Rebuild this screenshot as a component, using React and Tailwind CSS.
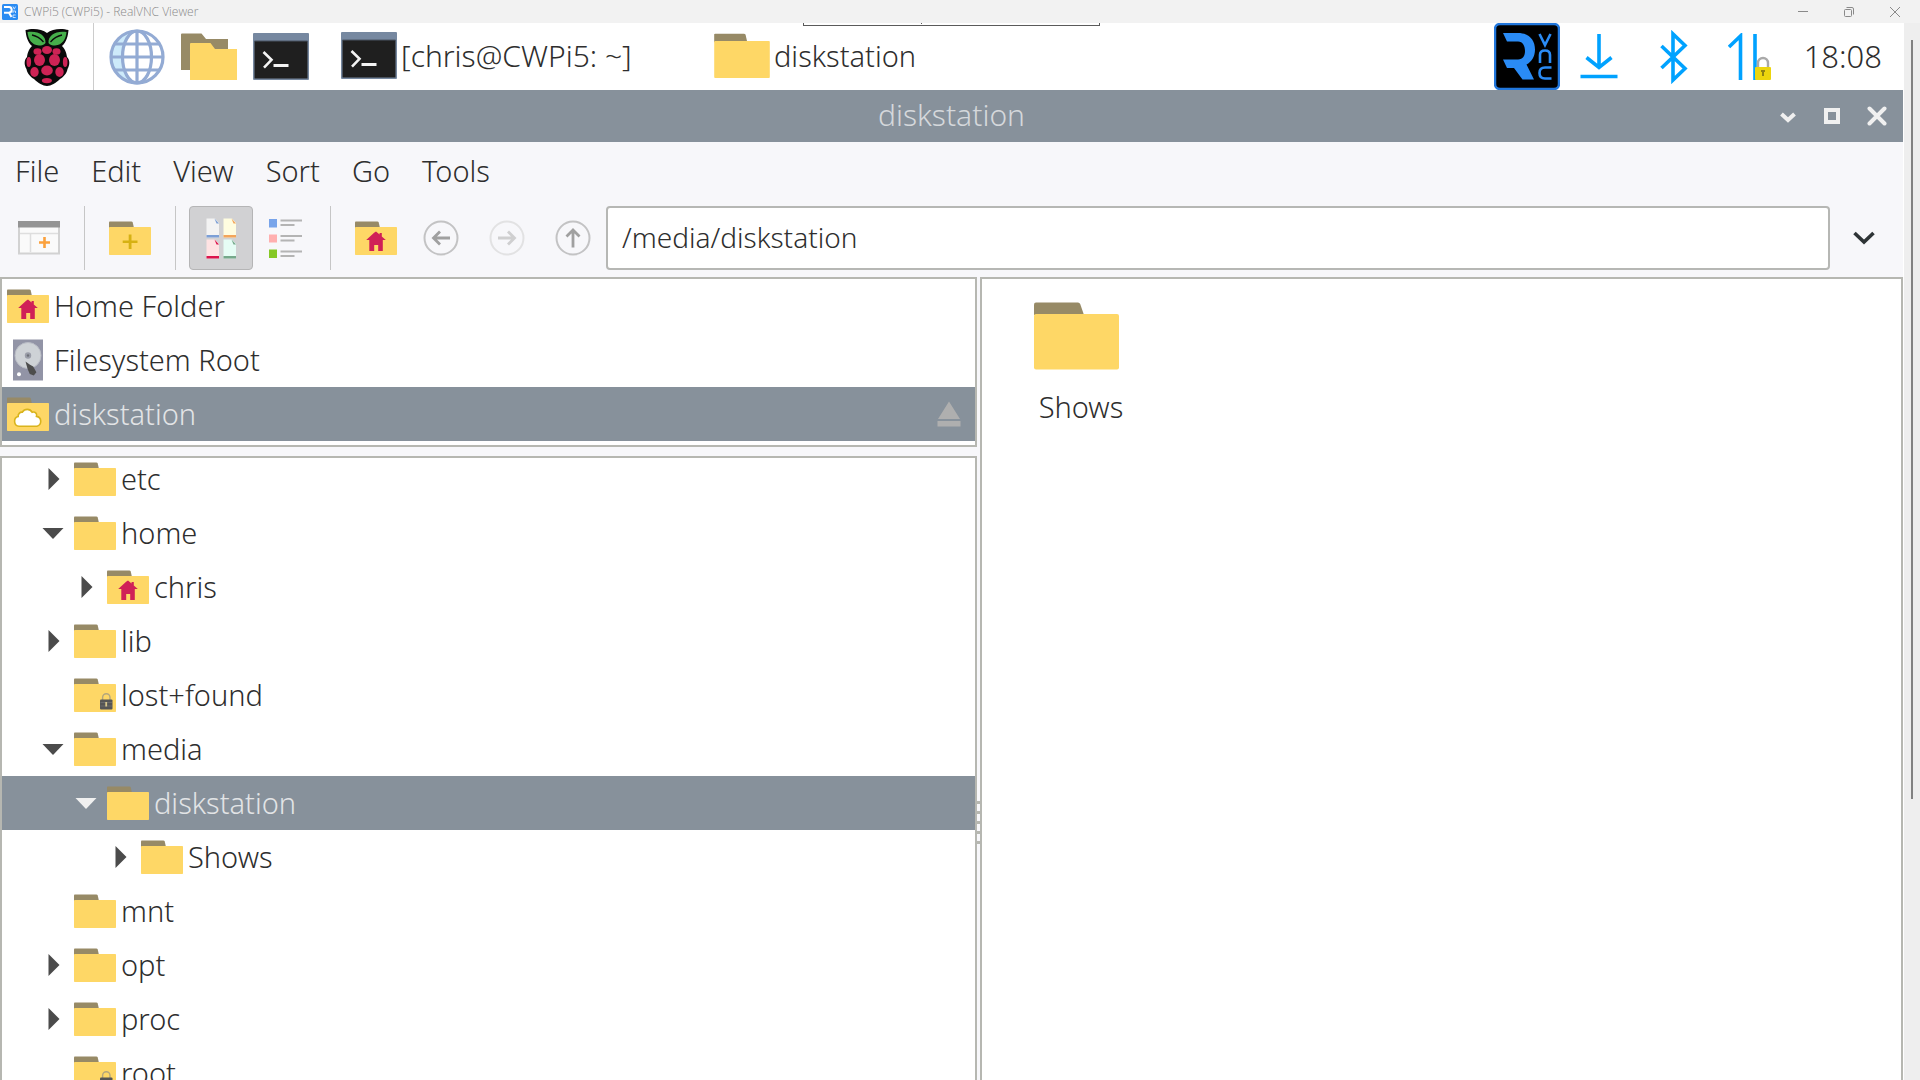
import React from "react";

const MENUS = ["File", "Edit", "View", "Sort", "Go", "Tools"];

const PLACES = [
  { name: "Home Folder", icon: "home" },
  { name: "Filesystem Root", icon: "disk" },
  { name: "diskstation", icon: "cloud", selected: true, eject: true },
];

// arrow: "right" = collapsed, "down" = expanded, none = leaf
const TREE = [
  { name: "etc", level: 1, arrow: "right" },
  { name: "home", level: 1, arrow: "down" },
  { name: "chris", level: 2, arrow: "right", icon: "home" },
  { name: "lib", level: 1, arrow: "right" },
  { name: "lost+found", level: 1, icon: "lock" },
  { name: "media", level: 1, arrow: "down" },
  { name: "diskstation", level: 2, arrow: "down", selected: true },
  { name: "Shows", level: 3, arrow: "right" },
  { name: "mnt", level: 1 },
  { name: "opt", level: 1, arrow: "right" },
  { name: "proc", level: 1, arrow: "right" },
  { name: "root", level: 1, icon: "lock" },
];

const INDENT = { 1: "pl-[39px]", 2: "pl-[72px]", 3: "pl-[106px]" };

/* ---------- Icons ---------- */

function FolderIcon({ icon, className = "h-[34px] w-[42px]" }) {
  return (
    <svg viewBox="0 0 42 34" className={`shrink-0 ${className}`} aria-hidden="true">
      <path d="M0 7V1.2Q0 .5.8 .5H22.4q.9 0 1.3.9L25 7z" fill="#978a66" />
      <rect y="6" width="42" height="28" rx=".7" fill="#fed766" />
      {icon === "home" && (
        <path d="M21 10.5l3.6 3V12h2.2v3.4l4 3.6h-3v11h-4.6v-6h-4v6h-4.9V19h-3.1l7.9-7.200z" fill="#d02057" />
      )}
      {icon === "plus" && <path d="M19.7 13.5h2.8v6h6v2.6h-6v6h-2.8v-6h-6v-2.6h6z" fill="#d6b113" />}
      {icon === "cloud" && (
        <path
          d="M12 29.2a4.9 4.9 0 0 1-.8-9.6 3.8 3.8 0 0 1 4.2-4.4 5.6 5.6 0 0 1 9.8.1 3.2 3.2 0 0 1 4.3 4.1 5 5 0 0 1 .4 9.8z"
          fill="#fff"
          stroke="#d9b41c"
          strokeWidth="1.6"
        />
      )}
      {icon === "lock" && (
        <g>
          <path d="M28.6 22v-2.6a3.7 3.7 0 0 1 7.4 0V22" fill="none" stroke="#b3a67d" strokeWidth="1.4" />
          <rect x="26" y="21.5" width="12.5" height="10" rx="1" fill="#555" />
          <path d="M26.5 24.5h11.5M26.5 28h11.5" stroke="#6b6b6b" strokeWidth="1" />
          <path d="M31.3 24h1.8v4.5h-1.8z" fill="#d6c58b" />
        </g>
      )}
    </svg>
  );
}

function DiskIcon() {
  return (
    <svg viewBox="0 0 42 42" className="h-[42px] w-[42px] shrink-0" aria-hidden="true">
      <rect x="6" y=".5" width="30" height="41" fill="#9294a6" />
      <circle cx="21" cy="16.5" r="13" fill="#ced2d6" stroke="#b9bcc5" strokeWidth="1" />
      <circle cx="21" cy="16.5" r="3.2" fill="#9a9da8" />
      <circle cx="21" cy="16.5" r="1.2" fill="#6d7078" />
      <path d="M18.5 22.5l4.5 3.2 3.2 1.8 3.2 5.8-2.6 3.2-4-1.6-2.2-5z" fill="#4d4d4d" />
      <circle cx="12" cy="35.3" r="2" fill="#fff" />
    </svg>
  );
}

function TerminalIcon() {
  return (
    <svg viewBox="0 0 56 47" className="h-[47px] w-[56px] shrink-0" aria-hidden="true">
      <rect width="56" height="47" rx="1" fill="#7688a0" />
      <rect x="1.5" y="8" width="53" height="37.5" fill="#1f1f1f" />
      <path d="M1.5 8h53" stroke="#4a5563" strokeWidth="1" />
      <path d="M10.5 19l8 7.8-7.5 7.8" fill="none" stroke="#f4f4f4" strokeWidth="2.6" />
      <path d="M20.5 32.5h15" stroke="#f4f4f4" strokeWidth="3" />
    </svg>
  );
}

function RaspberryIcon() {
  const drupelets = [
    [23, 22, 5, 4], [13.5, 23.5, 4, 3.2], [32.5, 23.5, 4, 3.2],
    [15.5, 32, 5.5, 6], [30.5, 32, 5.5, 6], [23, 42.5, 5.8, 5],
    [4.8, 34, 2.3, 5], [41.2, 34, 2.3, 5], [10.5, 44, 4.2, 5],
    [35.5, 44, 4.2, 5], [22.9, 52.6, 5, 2.7],
  ];
  return (
    <svg viewBox="0 0 46 58" className="h-[58px] w-[46px]" aria-hidden="true">
      <path
        d="M23 5C18 .5 8 0 1.5 2c.5 6 2 12 6.5 16C4 22 3.5 26 3 29c-3 3-3 8-.5 12 .5 4 4 8 7.5 10 4 4 9 7 13 7s9-3 13-7c3.5-2 7-6 7.5-10 2.5-4 2.5-9-.5-12-.5-3-1-7-5-11 4.500-4 6-10 6.500-16C38 0 28 .5 23 5z"
        fill="#0a0a0a"
      />
      <path d="M21.5 15C22 7 14 2.5 3.5 4c.5 7 4 13 11.5 13.5 3 0 5-.5 6.5-2.5zM24.5 15C24 7 32 2.5 42.5 4c-.5 7-4 13-11.5 13.5-3 0-5-.5-6.5-2.5z" fill="#46af4b" />
      <path d="M8 7c5 1 8.5 3.5 11.5 7M38 7c-5 1-8.5 3.5-11.5 7" fill="none" stroke="#0a0a0a" strokeWidth="1.3" />
      {drupelets.map(([cx, cy, rx, ry]) => (
        <ellipse key={`${cx}-${cy}`} cx={cx} cy={cy} rx={rx} ry={ry} fill="#cd2355" />
      ))}
    </svg>
  );
}

function GlobeIcon() {
  return (
    <svg viewBox="0 0 56 56" className="h-14 w-14" aria-hidden="true">
      <circle cx="28" cy="28" r="26" fill="#fff" />
      <path d="M28 2A26 26 0 0 0 28 54C18 50 13 40 13 28S18 6 28 2z" fill="#cdeafa" />
      <g fill="none" stroke="#93abd4" strokeWidth="3.2">
        <circle cx="28" cy="28" r="26" />
        <ellipse cx="28" cy="28" rx="14.5" ry="26" />
        <path d="M28 2v52M2 28h52M6 15h44M6 41h44" />
      </g>
    </svg>
  );
}

function FilesIcon() {
  return (
    <svg viewBox="0 0 56 47" className="h-[47px] w-[56px]" aria-hidden="true">
      <path d="M0 1.5Q0 .5 1 .5H20.5L25 6H47V37H0z" fill="#978a66" />
      <path d="M9 11Q9 10 10 10H29.5L34 16H56V47H9z" fill="#fed766" />
    </svg>
  );
}

function VncIcon() {
  return (
    <svg viewBox="0 0 66 67" className="h-[67px] w-[66px]" aria-hidden="true">
      <rect x="1" y="1" width="64" height="65" rx="5" fill="#000" stroke="#2277dc" strokeWidth="2.5" />
      <path
        d="M9 10H24C35 10 41 17 41 26.500c0 7-3.500 12.500-8.500 15L40 56.500H28.500L20 45H13L9 36.500H24c5 0 7-4 7-8.500S29 18.500 24 18.500H13z"
        fill="#2a8bf5"
      />
      <g fill="none" stroke="#2a8bf5" strokeWidth="2.6">
        <path d="M45.5 11l5.5 11 5.5-11" />
        <path d="M46 40V32q0-4.5 5-4.5t5 4.5v8" />
        <path d="M57.5 44.5H51q-5.5 0-5.5 5.5T51 55.5h6.5" />
      </g>
    </svg>
  );
}

function ViewerLogo() {
  return (
    <svg viewBox="0 0 16 16" className="h-4 w-4" aria-hidden="true">
      <rect width="16" height="16" rx="1.5" fill="#2a8bf2" />
      <path d="M2 3h4.5a2.6 2.6 0 0 1 .8 5.5M2 8.7h5L9.5 13" fill="none" stroke="#fff" strokeWidth="2" />
      <path d="M11 2.5l1.3 2.7 1.3-2.7M11 9V7h2.5v2M13.7 11H11v2.5h2.7" fill="none" stroke="#d4e8ff" strokeWidth=".9" />
    </svg>
  );
}

function NetworkIcon() {
  return (
    <svg viewBox="0 0 44 48" className="h-12 w-11" aria-hidden="true">
      <path d="M1 14L12.5 3V47M27 1V47" fill="none" stroke="#00a2ff" strokeWidth="3.6" />
      <path d="M30 35V30a5 5 0 0 1 10 0v5" fill="none" stroke="#a9a9a9" strokeWidth="2.4" />
      <rect x="27" y="34" width="16" height="13" rx="1" fill="#ecd50d" />
      <path d="M33 38h4M35 38v5" stroke="#8f8312" strokeWidth="2" />
    </svg>
  );
}

function TreeArrow({ arrow, selected }) {
  return (
    <svg viewBox="0 0 24 24" className="h-6 w-6 shrink-0" fill={selected ? "#f0f0f0" : "#4b4b4b"} aria-hidden="true">
      {arrow === "right" && <path d="M7.5 1L18.5 12L7.5 23z" />}
      {arrow === "down" && <path d="M1.5 7H22.5L12 18z" />}
    </svg>
  );
}

function NewWindowIcon() {
  return (
    <svg viewBox="0 0 42 34" className="h-[34px] w-[42px]" aria-hidden="true">
      <rect x="1" y="2" width="40" height="30.5" fill="#fafafa" stroke="#d2d2d2" strokeWidth="2" />
      <rect width="42" height="6.5" fill="#949494" />
      <path d="M2 12.5H40M12.5 12.5V31" stroke="#dedede" strokeWidth="1.5" />
      <path d="M26.5 16v11M21 21.5H32" stroke="#fba13c" strokeWidth="2.6" />
    </svg>
  );
}

function PagesIcon() {
  const pages = [
    [0, 0, "#f3f3f3", "#7c9fd6"],
    [17, 0, "#fffde0", "#f3a55b"],
    [0, 21, "#ffe3e3", "#dc134c"],
    [17, 21, "#e6fdf5", "#76a98b"],
  ];
  return (
    <svg viewBox="0 0 31 41" className="h-[41px] w-[31px]" aria-hidden="true">
      {pages.map(([x, y, fill, edge]) => (
        <g key={`${x}-${y}`} transform={`translate(${x} ${y})`}>
          <path d="M.5 .5h8.500l4 4.500v14.500H.5z" fill={fill} />
          <path d="M8.500 .5l4.500 5h-2.500z" fill={edge} />
          <path d="M.5 17h12.500v2.500H.5z" fill={edge} />
        </g>
      ))}
    </svg>
  );
}

function ListIcon() {
  return (
    <svg viewBox="0 0 34 41" className="h-[41px] w-[34px]" aria-hidden="true">
      <rect x="1" y="1" width="8" height="8.5" fill="#78a4ea" />
      <rect x="1" y="16.5" width="8" height="8" fill="#ffafaf" />
      <rect x="1" y="31.5" width="8" height="8.5" fill="#86c926" />
      <path
        d="M12.5 2.5H34M12.5 7H26.5M12.5 18H34M12.5 22.5H26.5M12.5 33.5H34M12.5 38H26.5"
        stroke="#b4b4b4"
        strokeWidth="1.8"
      />
    </svg>
  );
}

function RoundArrowIcon({ path, faded }) {
  return (
    <svg viewBox="0 0 36 36" className="h-9 w-9" fill="none" aria-hidden="true">
      <circle cx="18" cy="18" r="16.5" stroke={faded ? "#e2e2e3" : "#c3c3c4"} strokeWidth="2" />
      <path d={path} stroke={faded ? "#cfcfd0" : "#a0a0a0"} strokeWidth="2.8" />
    </svg>
  );
}

/* ---------- Parts ---------- */

function ToolButton({ label, active, wide, disabled, children }) {
  return (
    <button
      type="button"
      aria-label={label}
      aria-pressed={active}
      disabled={disabled}
      className={`flex h-16 shrink-0 items-center justify-center ${wide ? "w-[66px]" : "w-16"} ${
        active ? "rounded-sm border border-[#b5b5b6] bg-[#d1d1d3]" : ""
      }`}
    >
      {children}
    </button>
  );
}

function Separator() {
  return <div className="mx-[13px] h-16 w-px shrink-0 bg-[#c6c6c6]" />;
}

// Title strip of the remote viewer itself
function ViewerTitle() {
  return (
    <header className="flex h-[23px] shrink-0 items-center bg-[#f2f2f2] pl-0.5 text-[#8a8a8a]">
      <ViewerLogo />
      <span className="ml-1.5 font-['Open_Sans'] text-[12px] leading-4">CWPi5 (CWPi5) - RealVNC Viewer</span>
      <div className="ml-auto flex">
        <button type="button" aria-label="Minimise" className="flex h-5 w-[46px] items-center justify-center">
          <svg viewBox="0 0 12 12" className="h-3 w-3" stroke="#8a8a8a" fill="none">
            <path d="M1 5.5H11" />
          </svg>
        </button>
        <button type="button" aria-label="Restore" className="flex h-5 w-[46px] items-center justify-center">
          <svg viewBox="0 0 12 12" className="h-3 w-3" stroke="#8a8a8a" fill="none">
            <rect x="1.5" y="3.5" width="7" height="7" rx="1" />
            <path d="M3.5 1.5H9q1.5 0 1.5 1.5V8.5" />
          </svg>
        </button>
        <button type="button" aria-label="Close viewer" className="mr-0.5 flex h-5 w-[46px] items-center justify-center">
          <svg viewBox="0 0 12 12" className="h-3 w-3" stroke="#8a8a8a" fill="none">
            <path d="M1 1L11 11M11 1L1 11" />
          </svg>
        </button>
      </div>
    </header>
  );
}

function Taskbar() {
  return (
    <div className="relative flex h-[67px] shrink-0 items-center bg-white text-[30px] leading-9">
      {/* Edge of the viewer's hidden toolbar */}
      <div className="absolute top-0 left-[803px] h-[3px] w-[297px] border border-t-0 border-[#5a5a5a]">
        <div className="ml-[117px] h-px w-px bg-[#5a5a5a]" />
      </div>

      <button type="button" aria-label="Menu" className="flex h-full w-[93px] items-center justify-center">
        <RaspberryIcon />
      </button>
      <div className="mr-[15px] h-full w-px bg-[#cccccc]" />
      <div className="flex items-center gap-4">
        <button type="button" aria-label="Web browser"><GlobeIcon /></button>
        <button type="button" aria-label="File manager"><FilesIcon /></button>
        <button type="button" aria-label="Terminal"><TerminalIcon /></button>
      </div>

      <button type="button" className="ml-8 flex w-[373px] items-center gap-1 pb-0.5 whitespace-nowrap">
        <TerminalIcon />
        [chris@CWPi5: ~]
      </button>
      <button type="button" className="flex items-center gap-1 pb-0.5 text-[29px]">
        <FolderIcon className="h-[45px] w-14" />
        diskstation
      </button>

      <div className="ml-auto flex items-center">
        <button type="button" aria-label="VNC server"><VncIcon /></button>
        <button type="button" aria-label="Updates" className="ml-5">
          <svg viewBox="0 0 38 46" className="h-[46px] w-[38px]" fill="none" stroke="#00a2ff" strokeWidth="3.6" aria-hidden="true">
            <path d="M19 0V34M6.5 23.5L19 33.5L31.5 23.5M.5 42.5H37.5" />
          </svg>
        </button>
        <button type="button" aria-label="Bluetooth" className="ml-[42px]">
          <svg viewBox="0 0 28 54" className="h-[54px] w-7" fill="none" stroke="#00a2ff" strokeWidth="3.6" aria-hidden="true">
            <path d="M1.5 16L25 38.5L13 50V4L25 15.5L1.5 38" />
          </svg>
        </button>
        <button type="button" aria-label="Network" className="ml-10"><NetworkIcon /></button>
        <time className="mr-[21px] ml-8 pb-0.5 text-[31px]">18:08</time>
      </div>
    </div>
  );
}

function WindowTitle() {
  return (
    <div className="flex h-[52px] shrink-0 items-center bg-[#87919b] text-[#d5d8db]">
      <h1 className="flex-1 pb-0.5 pl-[141px] text-center text-[30px] leading-9 font-light">diskstation</h1>
      <div className="flex w-[141px] items-center gap-[27px] pl-[17px]">
        <button type="button" aria-label="Minimise window">
          <svg viewBox="0 0 18 18" className="h-[18px] w-[18px]" fill="none" stroke="#f0f0f0" strokeWidth="4" aria-hidden="true">
            <path d="M2.5 7L9 13L15.5 7" />
          </svg>
        </button>
        <button type="button" aria-label="Maximise window">
          <svg viewBox="0 0 16 16" className="h-4 w-4" fill="none" stroke="#f0f0f0" strokeWidth="4" aria-hidden="true">
            <rect x="2" y="2" width="12" height="12" />
          </svg>
        </button>
        <button type="button" aria-label="Close window">
          <svg viewBox="0 0 20 20" className="h-5 w-5" fill="none" stroke="#f0f0f0" strokeWidth="4" strokeLinecap="round" aria-hidden="true">
            <path d="M2.5 2.5L17.5 17.5M17.5 2.5L2.5 17.5" />
          </svg>
        </button>
      </div>
    </div>
  );
}

function Toolbar() {
  return (
    <div className="flex h-[78px] shrink-0 items-center pl-[7px]">
      <ToolButton label="New window"><NewWindowIcon /></ToolButton>
      <Separator />
      <ToolButton label="New folder"><FolderIcon icon="plus" /></ToolButton>
      <Separator />
      <ToolButton label="Icon view" active><PagesIcon /></ToolButton>
      <ToolButton label="List view"><ListIcon /></ToolButton>
      <Separator />
      <ToolButton label="Home"><FolderIcon icon="home" /></ToolButton>
      <ToolButton label="Back" wide><RoundArrowIcon path="M27 18H11M17 11.5L10.5 18L17 24.5" /></ToolButton>
      <ToolButton label="Forward" wide disabled><RoundArrowIcon path="M9 18H25M19 11.5L25.5 18L19 24.5" faded /></ToolButton>
      <ToolButton label="Up" wide><RoundArrowIcon path="M18 27.5V10M11.5 16.5L18 10L24.5 16.5" /></ToolButton>
      <input
        type="text"
        aria-label="Location"
        defaultValue="/media/diskstation"
        className="h-16 min-w-0 flex-1 rounded-sm border-2 border-[#b6b7b4] bg-white px-3.5 pb-0.5 text-[28px] outline-none"
      />
      <button type="button" aria-label="Location history" className="flex h-16 w-[73px] items-center justify-center pr-1.5">
        <svg viewBox="0 0 24 16" className="h-4 w-6" fill="none" stroke="#2e3436" strokeWidth="3.6" aria-hidden="true">
          <path d="M2.5 3L12 12L21.5 3" />
        </svg>
      </button>
    </div>
  );
}

function PlaceRow({ place }) {
  return (
    <li className={`flex h-[54px] items-center pl-[5px] ${place.selected ? "bg-[#87919b] text-[#e2e4e6]" : ""}`}>
      {place.icon === "disk" ? <DiskIcon /> : <FolderIcon icon={place.icon} />}
      <span className="ml-[5px] flex-1">{place.name}</span>
      {place.eject && (
        <button type="button" aria-label={`Eject ${place.name}`} className="mr-3.5">
          <svg viewBox="0 0 24 26" className="h-[26px] w-6" fill="#afafaf" aria-hidden="true">
            <path d="M12 .5L23 18H1zM.5 20H23.5V25.5H.5z" />
          </svg>
        </button>
      )}
    </li>
  );
}

function TreeRow({ node }) {
  return (
    <li
      className={`flex h-[54px] items-center ${INDENT[node.level]} ${
        node.selected ? "bg-[#87919b] text-[#e2e4e6]" : ""
      }`}
    >
      <TreeArrow arrow={node.arrow} selected={node.selected} />
      <FolderIcon icon={node.icon} className="ml-[9px] h-[34px] w-[42px]" />
      <span className="ml-[5px]">{node.name}</span>
    </li>
  );
}

function App() {
  return (
    <div className="flex h-screen flex-col overflow-hidden bg-[#eeeeee] font-['Noto_Sans',sans-serif] text-[29px] leading-9 font-[350] text-[#2e2e2e]">
      <ViewerTitle />

      <div className="flex min-h-0 flex-1">
        {/* Remote desktop */}
        <main className="flex min-w-0 flex-1 flex-col bg-[#f7f7fa]">
          <Taskbar />
          <WindowTitle />

          <nav className="flex h-[57px] shrink-0 items-center gap-8 pl-[15px]">
            {MENUS.map((menu) => (
              <button key={menu} type="button">{menu}</button>
            ))}
          </nav>

          <Toolbar />

          <div className="flex min-h-0 flex-1">
            {/* Side pane */}
            <div className="flex min-w-0 flex-[977] flex-col gap-[9px]">
              <ul className="shrink-0 border-2 border-[#b6b7b1] bg-white pb-1">
                {PLACES.map((place) => (
                  <PlaceRow key={place.name} place={place} />
                ))}
              </ul>
              <div className="min-h-0 flex-1 overflow-hidden border-2 border-b-0 border-[#b6b7b1] bg-white">
                {/* list is scrolled a few pixels down */}
                <ul className="-mt-1.5">
                  {TREE.map((node) => (
                    <TreeRow key={`${node.level}-${node.name}`} node={node} />
                  ))}
                </ul>
              </div>
            </div>

            {/* Pane handle */}
            <div className="flex w-[3px] shrink-0 flex-col items-center gap-[7px] pt-[524px]">
              {[0, 1, 2, 3, 4].map((dot) => (
                <div key={dot} className="h-[3px] w-[3px] bg-[#b6b7b1]" />
              ))}
            </div>

            {/* Folder contents */}
            <section className="min-w-0 flex-[919] border-2 border-b-0 border-[#b6b7b1] bg-white">
              <button type="button" className="flex w-[198px] flex-col items-center gap-[19px] pt-[23px]">
                <svg viewBox="0 0 94 68" className="h-[68px] w-[94px]" aria-hidden="true">
                  <path d="M0 13V2.5Q0 .5 2 .5H44q1.5 0 2.2 1.5L50 13z" fill="#978a66" />
                  <rect y="12" width="85" height="55.5" rx="2" fill="#fed766" />
                </svg>
                Shows
              </button>
            </section>
          </div>
        </main>

        {/* Viewer scroll gutter */}
        <div className="flex w-[17px] shrink-0 justify-center border-l border-white pt-[17px]">
          <div className="h-[73%] w-0.5 bg-[#828282]" />
        </div>
      </div>
    </div>
  );
}

export default App;
